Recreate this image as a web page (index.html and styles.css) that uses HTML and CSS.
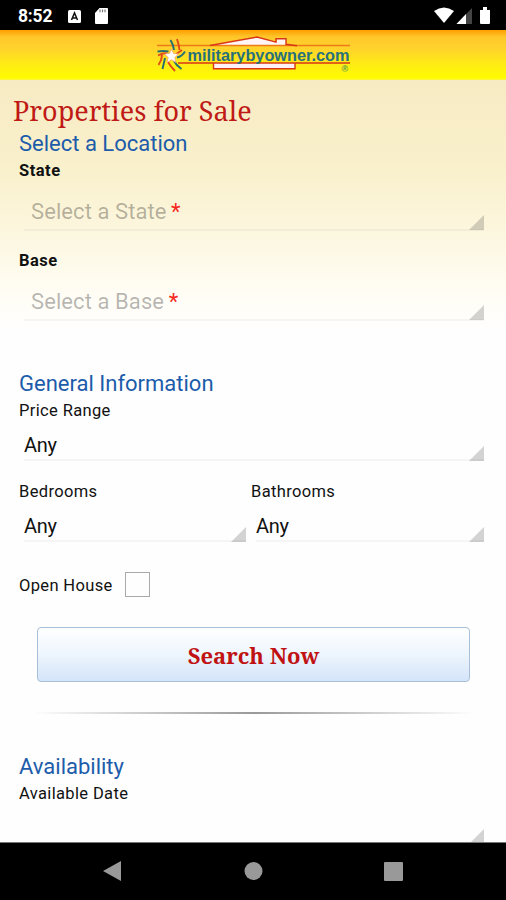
FILE: index.html
```html
<!DOCTYPE html>
<html lang="en">
<head>
<meta charset="utf-8">
<title>MilitaryByOwner</title>
<link rel="stylesheet" href="styles.css">
</head>
<body>
<div class="phone">
  <div class="status">
    <span class="clock">8:52</span>
    <svg class="badge-a" width="13" height="13" viewBox="0 0 13 13"><rect width="13" height="13" rx="1.5" fill="#fff"/><path d="M3.5 10 6.5 3l3 7M4.8 8h3.4" fill="none" stroke="#111" stroke-width="1.5"/></svg>
    <svg class="card" width="13" height="16" viewBox="0 0 13 16"><path d="M4.5 0H12a1 1 0 0 1 1 1v14a1 1 0 0 1-1 1H1a1 1 0 0 1-1-1V5z" fill="#fff"/><path d="M5 1.5v2.800M7.500 1.500v2.800M10 1.500v2.800" stroke="#777" stroke-width="1.200"/></svg>
    <svg class="signals" width="57" height="18" viewBox="0 0 57 18"><path d="M0 4Q10-3 20 4L10 16z" fill="#fff"/><path d="M22.500 17 38 1v16z" fill="#444"/><path d="M22.500 17 32 7v10z" fill="#fff"/><path d="M46 3h3V0h4v3h3v13a1 1 0 0 1-1 1h-8a1 1 0 0 1-1-1z" fill="#fff"/></svg>
  </div>
  <header class="brand">
    <svg width="210" height="40" viewBox="155 35 210 40">
      <path d="M213 45 257 37l20 5v-4h9v6l10 1.500z" fill="#fff5f5"/>
      <rect x="213" y="63" width="82" height="5.500" fill="#fff0f5"/>
      <g fill="none" stroke="#d93616" stroke-width="1.400">
        <path d="M157 45.500h193" stroke="#ec7b17" stroke-width="1.700"/>
        <path d="M210 45.500 257 37l19 5.200V38.800h10v5.500l11 1.500M178 63h172" />
        <path d="M213.500 63v5.700H295V63"/>
      </g>
      <g fill="none" stroke-width="1.900">
        <path d="M170.500 40q3 5 3.500 10M185 51.500q-3 5-8 6M157.500 51.500q6-1 11 0M165 58l-2.500 11M174 61q2 4 7.500 8" stroke="#27706f"/>
        <path d="M177 39q2 6 2.500 11M182 50q-4 3-6 4M158 55.500q6-3 9-2M162 55q0 5-3.500 10M168 62q3 5 7 9" stroke="#e14b18"/>
      </g>
      <path d="m171.500 49 2 4.500 5 .5-3.700 3.400 1.100 5-4.400-2.600-4.400 2.600 1.100-5-3.700-3.400 5-.5z" fill="#fff" stroke="#f29a78" stroke-width=".7"/>
      <text class="logo-text" x="187.500" y="61" textLength="162" lengthAdjust="spacingAndGlyphs">militarybyowner.com</text>
      <text class="logo-reg" x="341.500" y="72">®</text>
    </svg>
  </header>
  <main class="page">
    <h1>Properties for Sale</h1>
    <section class="location">
      <h2>Select a Location</h2>
      <label class="bold">State</label>
      <div class="select required"><span class="hint">Select a State</span> <span class="star">*</span></div>
      <label class="bold base">Base</label>
      <div class="select required"><span class="hint">Select a Base</span> <span class="star">*</span></div>
    </section>
    <section class="general">
      <h2>General Information</h2>
      <label>Price Range</label>
      <div class="select">Any</div>
      <div class="pair">
        <div><label>Bedrooms</label><div class="select">Any</div></div>
        <div><label>Bathrooms</label><div class="select">Any</div></div>
      </div>
      <div class="open"><label>Open House</label><span class="box"></span></div>
    </section>
    <button class="search">Search Now</button>
    <div class="rule"></div>
    <section class="available">
      <h2>Availability</h2>
      <label>Available Date</label>
      <div class="select"></div>
    </section>
  </main>
  <nav class="nav">
    <svg width="506" height="57" viewBox="0 0 506 57" fill="#999"><path d="M103 28 121 18v20z"/><circle cx="253.500" cy="28" r="9"/><rect x="384" y="19" width="19" height="19" rx="1"/></svg>
  </nav>
</div>
</body>
</html>
```
FILE: styles.css
```css
* { box-sizing: border-box; }
body { margin: 0; font-family: Roboto, sans-serif; color: #111; }
.phone { width: 506px; height: 900px; display: flex; flex-direction: column; overflow: hidden; background: #fefefe; }
.status { height: 30px; flex: none; background: #000; display: flex; align-items: center; padding: 2px 16px 0 18px; }
.clock { color: #fff; font-size: 17.5px; font-weight: 700; width: 50px; letter-spacing: -.2px; }
.card { margin-left: 14px; }
.signals { margin-left: auto; margin-right: -1px; }
.brand { height: 50px; flex: none; padding: 5px 0 0 155px; background: linear-gradient(#ff9d00, #ffc72b 7px, #ffd22c 18px, #ffea17 33px, #fffb00 48px, #fdf34a); }
.brand svg { display: block; overflow: visible; }
.logo-text { font: 700 17px "Liberation Sans", sans-serif; fill: #27707c; }
.logo-reg { font: 700 9px "Liberation Sans", sans-serif; fill: #5d9c50; }
.page { height: 762px; flex: none; overflow: hidden; padding: 14px 22px 0 19px; background: linear-gradient(#f7ebc3, #f9f0cc 90px, #fcf6de 150px, #fffcf0 200px, #fefefe 250px); }
h1 { margin: 0 0 0 -6px; height: 37px; font: 400 27px/34px "Noto Serif", "Droid Serif", "DejaVu Serif Condensed", "DejaVu Serif", serif; color: #c01a16; letter-spacing: .03px; white-space: nowrap; }
h2 { margin: 0; font-size: 22px; line-height: 26px; font-weight: 400; color: #1c5cab; letter-spacing: 0; }
label { display: block; font-size: 16.5px; line-height: 28px; height: 27px; letter-spacing: .36px; }
.bold { font-weight: 700; letter-spacing: .5px; }
.select { position: relative; height: 37px; margin-left: 5px; font-size: 20px; line-height: 42px; letter-spacing: -.3px; border-bottom: 2px solid rgba(0,0,0,.035); }
.select::after { content: ""; position: absolute; right: 0; bottom: -2px; width: 15px; height: 15px; background: rgba(0,0,0,.17); clip-path: polygon(100% 0, 100% 100%, 0 100%); }
.select.required { height: 47px; padding-left: 7px; font-size: 22px; line-height: 56px; letter-spacing: .08px; }
.select.required::after { bottom: -1px; }
.hint { color: #0000004a; }
.star { color: #f5281e; margin-left: -1px; }
.base { margin-top: 16px; }
.general { margin-top: 50px; }
.pair { display: grid; grid-template-columns: 227px 1fr; column-gap: 5px; margin-top: 17px; }
.open { display: flex; align-items: center; gap: 12px; margin-top: 29px; height: 26px; }
.open label { line-height: 29px; }
.box { width: 25px; height: 25px; border: 1px solid #aaa; }
.search { display: block; width: 433px; height: 55px; margin: 30px 0 0 18px; border: 1.5px solid #a8bfd8; border-radius: 4px; background: linear-gradient(#fff, #edf5fd 50%, #d4e4f9); font: 700 22px "Noto Serif", "Droid Serif", "DejaVu Serif Condensed", "DejaVu Serif", serif; color: #c01212; }
.rule { height: 2px; margin: 30px 9px 0 14px; background: linear-gradient(90deg, transparent, #999 50%, transparent); }
.available { margin-top: 40px; }
.nav { height: 58px; flex: none; background: #000; border-top: 1px solid #777; }
.nav svg { display: block; }
```
